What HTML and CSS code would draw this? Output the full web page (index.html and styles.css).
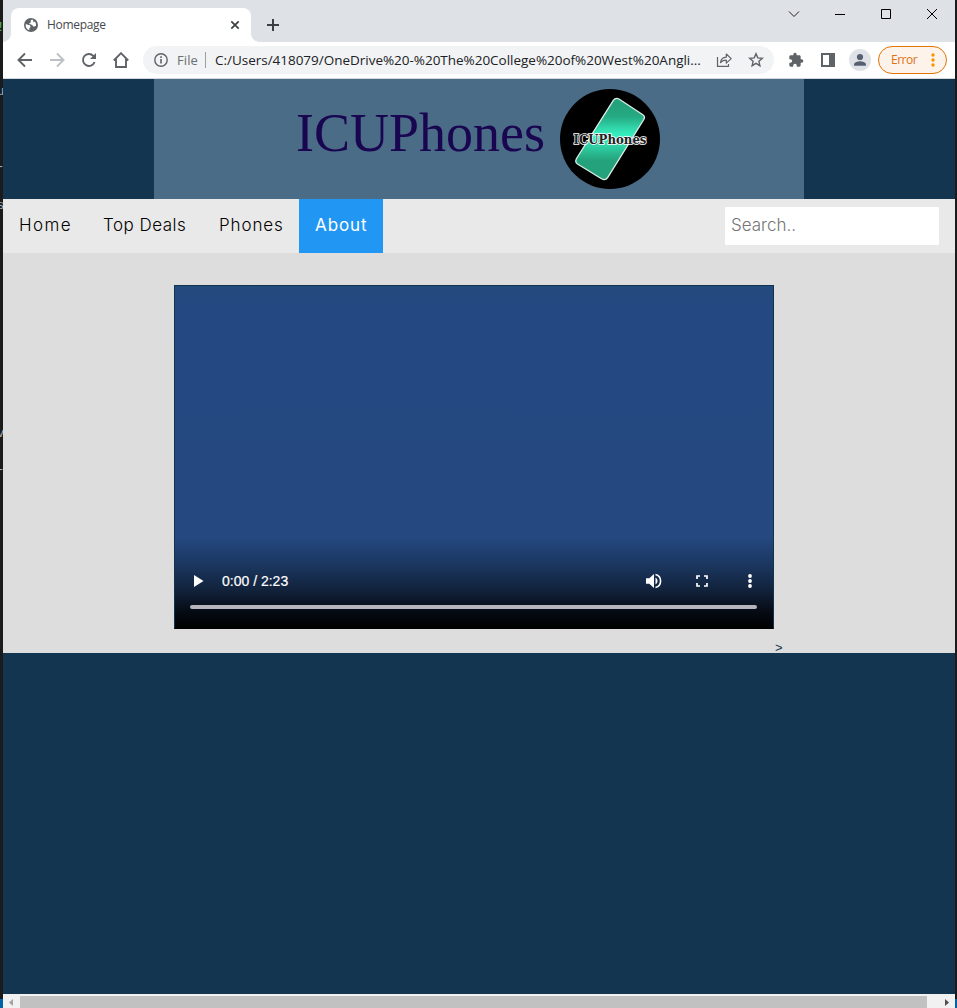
FILE: index.html
```html
<!DOCTYPE html>
<html lang="en">
<head>
<meta charset="utf-8">
<title>Homepage</title>
<link rel="stylesheet" href="styles.css">
</head>
<body>
<div class="desktop">
<span class="sliver sliver-a">!</span><span class="sliver sliver-b">u</span><span class="sliver sliver-c">v</span><span class="sliver sliver-d">-</span><span class="sliver sliver-e">s</span><span class="sliver sliver-f">-</span>
<div class="window">
  <div class="tabstrip">
    <div class="tab">
      <svg class="globe" width="14" height="14" viewBox="0 0 14 14"><circle cx="7" cy="7" r="7" fill="#5f6368"/><path d="M8.500 1.600C7 2 6.300 2.800 6.700 3.600c.4.700 0 1.200-.8 1.300-.8.200-.7 1-.2 1.300.5.400 1.800.2 2.500.7.700.6.600 1.500 1.500 1.600.8.100 1.300-.5 2.300-.5.200-1.700-.2-3.200-1.100-4.400-.5.500-1.400.5-1.600-.2-.2-.6.200-1.200-.8-1.800zM1.700 6.200c1.200 0 2.200.6 3.300.9 1 .3 1.700 1 1.400 2-.2.800-1 .8-1.100 1.600v1.500C3 11.500 1.300 9.300 1.700 6.200z" fill="#fff"/></svg>
      <span class="tab-title">Homepage</span>
      <svg class="tab-close" width="10" height="10" viewBox="0 0 10 10"><path d="M1.300 1.300l7.400 7.400M8.700 1.300L1.300 8.700" stroke="#3c4043" stroke-width="1.700"/></svg>
    </div>
    <svg class="newtab" width="12" height="12" viewBox="0 0 12 12"><path d="M6 0v12M0 6h12" stroke="#3c4043" stroke-width="2"/></svg>
    <div class="wincontrols">
      <svg width="46" height="28" viewBox="0 0 46 28"><path d="M18 11.500l5 5 5-5" fill="none" stroke="#222"/></svg>
      <svg width="46" height="28" viewBox="0 0 46 28"><path d="M18 14.500h10" stroke="#000"/></svg>
      <svg width="46" height="28" viewBox="0 0 46 28"><path d="M18.500 9.500h9v9h-9z" fill="none" stroke="#000"/></svg>
      <svg width="46" height="28" viewBox="0 0 46 28"><path d="M18 9l10 10M28 9L18 19" stroke="#000"/></svg>
    </div>
  </div>
  <div class="toolbar">
    <svg class="tool" viewBox="0 0 16 16"><path d="M15 8H2M8 1.500L1.500 8 8 14.500" fill="none" stroke="#5f6368" stroke-width="1.900"/></svg>
    <svg class="tool" viewBox="0 0 16 16"><path d="M1 8h13M8 1.500L14.500 8 8 14.500" fill="none" stroke="#bdc1c6" stroke-width="1.900"/></svg>
    <svg class="tool" viewBox="0 0 16 16"><path d="M13.600 10A6 6 0 1 1 12.300 3.800L14 5.600" fill="none" stroke="#5f6368" stroke-width="1.900"/><path d="M15 1v6H9z" fill="#5f6368"/></svg>
    <svg class="tool" viewBox="0 0 16 16"><path d="M.8 8.500L8 1.200l7.200 7.300M3 7v8h10V7" fill="none" stroke="#5f6368" stroke-width="1.900"/></svg>
    <div class="omnibox">
      <svg width="14" height="14" viewBox="0 0 14 14"><circle cx="7" cy="7" r="6.200" fill="none" stroke="#5f6368" stroke-width="1.400"/><path d="M7 6v4.400M7 3.300v1.600" stroke="#5f6368" stroke-width="1.600"/></svg>
      <span class="scheme">File</span>
      <span class="sep"></span>
      <span class="url">C:/Users/418079/OneDrive%20-%20The%20College%20of%20West%20Angli...</span>
      <svg class="share" width="16" height="16" viewBox="0 0 16 16"><path d="M1.500 5v9.300h11V12" fill="none" stroke="#5f6368" stroke-width="1.200"/><path d="M4.500 10.500c.4-3.400 2.400-5.200 5.800-5.400V2l4.900 4.600-4.900 4.500V8.200c-2.500 0-4.300.7-5.800 2.300z" fill="none" stroke="#5f6368" stroke-width="1.200" stroke-linejoin="round"/></svg>
      <svg class="star" width="16" height="16" viewBox="0 0 16 16"><path d="M8 1.800l1.800 4.100 4.500.4-3.400 3 1 4.400L8 11.400l-3.900 2.300 1-4.400-3.400-3 4.500-.4z" fill="none" stroke="#5f6368" stroke-width="1.400"/></svg>
    </div>
    <svg class="puzzle" width="16" height="16" viewBox="0 0 24 24"><path d="M20.500 11H19V7c0-1.100-.9-2-2-2h-4V3.500a2.500 2.500 0 0 0-5 0V5H4c-1.100 0-2 .9-2 2v3.800h1.500a2.700 2.700 0 0 1 0 5.400H2V20c0 1.100.9 2 2 2h3.800v-1.500a2.700 2.700 0 0 1 5.400 0V22H17c1.100 0 2-.9 2-2v-4h1.500a2.500 2.500 0 0 0 0-5z" fill="#5f6368"/></svg>
    <svg class="panel" width="14" height="14" viewBox="0 0 14 14"><path d="M0 0h14v14H0zM2 2v10h6V2z" fill="#5f6368" fill-rule="evenodd"/></svg>
    <svg class="profile" width="22" height="22" viewBox="0 0 22 22"><circle cx="11" cy="11" r="11" fill="#dee1e6"/><circle cx="11" cy="8" r="3.100" fill="#576071"/><path d="M5 16.800v-1.400c0-2 4-3.100 6-3.100s6 1.100 6 3.100v1.400z" fill="#576071"/></svg>
    <div class="error"><span>Error</span><svg width="4" height="14" viewBox="0 0 4 14"><g fill="#f29900"><circle cx="2" cy="2" r="1.700"/><circle cx="2" cy="7" r="1.700"/><circle cx="2" cy="12" r="1.700"/></g></svg></div>
  </div>
  <div class="page">
    <header class="banner">
      <h1>ICUPhones</h1>
      <svg class="logo" width="100" height="100" viewBox="0 0 100 100">
        <defs><linearGradient id="phone" gradientUnits="userSpaceOnUse" x1="0" y1="10" x2="0" y2="90"><stop offset=".08" stop-color="#24a27b"/><stop offset=".22" stop-color="#26aa83"/><stop offset=".42" stop-color="#34e8b9"/><stop offset=".48" stop-color="#36f0c2"/><stop offset=".57" stop-color="#31d5a9"/><stop offset=".77" stop-color="#24a27b"/></linearGradient></defs>
        <circle cx="50" cy="50" r="50"/>
        <path d="M53.500 11.200Q55.500 8.200 59 10L82.500 25.500Q85.600 27.500 83.800 30.500L47.800 88.300Q45.500 92 41.500 89.800L17.500 75Q14.600 73 16.500 69.500Z" fill="url(#phone)" stroke="#dcefe8" stroke-width="1.300"/>
        <text x="13.500" y="55" textLength="73" lengthAdjust="spacingAndGlyphs" class="logo-text">ICUPhones</text>
      </svg>
    </header>
    <nav class="topnav">
      <a class="home">Home</a><a class="deals">Top Deals</a><a class="phones">Phones</a><a class="about">About</a>
      <div class="search">Search..</div>
    </nav>
    <main class="content">
      <div class="video">
        <div class="controls">
          <svg width="10" height="12" viewBox="0 0 10 12"><path d="M0 0l9.500 6L0 12z" fill="#fff"/></svg>
          <span class="time">0:00 / 2:23</span>
          <svg class="volume" width="18" height="16" viewBox="0 0 18 16"><path d="M1 5.300h3.300L9 1v14l-4.700-4.300H1z" fill="#fff"/><path d="M10.500 4.500a4 4 0 0 1 0 7z" fill="#fff"/><path d="M10.500 1.500a6.700 6.700 0 0 1 0 13" fill="none" stroke="#fff" stroke-width="1.600"/></svg>
          <svg class="full" width="12" height="12" viewBox="0 0 12 12"><path d="M1 4V1h3M8 1h3v3M11 8v3H8M4 11H1V8" fill="none" stroke="#fff" stroke-width="1.700"/></svg>
          <svg class="more" width="4" height="14" viewBox="0 0 4 14"><g fill="#fff"><circle cx="2" cy="2" r="1.900"/><circle cx="2" cy="7" r="1.900"/><circle cx="2" cy="12" r="1.900"/></g></svg>
        </div>
        <div class="track"></div>
      </div>
      <span class="stray">&gt;</span>
    </main>
  </div>
  <div class="scrollbar">
    <svg width="17" height="14" viewBox="0 0 17 14"><path d="M10 5v7L6 8.500z" fill="#a3a3a3"/></svg>
    <div class="thumb"></div>
    <svg width="28" height="14" viewBox="0 0 28 14"><path d="M18 5v7l4-3.500z" fill="#505050"/></svg>
  </div>
</div>
</div>
</body>
</html>
```

FILE: styles.css
```css
* { box-sizing: border-box; }
body { margin: 0; }
svg { display: block; flex: none; }
.desktop { position: relative; width: 957px; height: 1008px; padding: 0 2px 0 3px; overflow: hidden; background: linear-gradient(#1b1b1b 0 999px, #0063a5 999px); }
.sliver { position: absolute; left: -3px; width: 6px; height: 14px; overflow: hidden; font: 12px/14px "Liberation Mono", monospace; color: #9bb0c0; }
.sliver-a { top: 21px; color: #57c957; }
.sliver-b { top: 85px; }
.sliver-c { top: 427px; }
.sliver-d { top: 463px; }
.sliver-e { top: 199px; }
.sliver-f { top: 160px; }
.window { position: relative; width: 952px; height: 1008px; display: flex; flex-direction: column; background: #fff; }

.tabstrip { height: 42px; flex: none; display: flex; align-items: flex-start; background: #dee1e6; }
.tab { position: relative; width: 240px; height: 34px; margin: 8px 0 0 8px; padding: 0 11px 0 13px; display: flex; align-items: center; background: #fff; border-radius: 8px 8px 0 0; }
.tab::before, .tab::after { content: ""; position: absolute; bottom: 0; width: 8px; height: 8px; }
.tab::before { left: -8px; background: radial-gradient(circle at 0 0, #dee1e6 7.500px, #fff 8px); }
.tab::after { right: -8px; background: radial-gradient(circle at 100% 0, #dee1e6 7.500px, #fff 8px); }
.tab-title { margin-left: 9px; flex: 1; font: 12px/16px "Open Sans", sans-serif; color: #45494d; letter-spacing: -0.300px; }
.newtab { margin: 19px 0 0 16px; }
.wincontrols { display: flex; margin-left: auto; }

.toolbar { height: 37px; flex: none; display: flex; align-items: center; padding: 0 8px 1px 14px; border-bottom: 1px solid #d5d7da; }
.tool { width: 16px; height: 16px; margin-right: 16px; }
.omnibox { width: 631px; height: 28px; margin-left: -2px; padding: 0 10px 0 11px; display: flex; align-items: center; border-radius: 14px; background: #f1f3f4; font: 13px/18px "Open Sans", sans-serif; white-space: nowrap; }
.scheme { width: 28px; margin-left: 9px; color: #6b6f73; letter-spacing: 0.100px; }
.sep { width: 1px; height: 16px; background: #9aa0a6; }
.url { width: 492px; margin-left: 9px; color: #202124; font-size: 13.500px; letter-spacing: -0.020px; }
.share { margin-left: 9px; }
.star { margin-left: auto; }
.puzzle { margin-left: 14px; }
.panel { margin-left: 17px; }
.profile { margin-left: 14px; }
.error { width: 69px; height: 28px; margin-left: 7px; padding: 0 11px 0 12px; display: flex; align-items: center; justify-content: space-between; border: 1px solid #e37400; border-radius: 14px; background: #fdf3ea; color: #dc7215; font: 12px/16px "Open Sans", sans-serif; letter-spacing: -0.500px; }

.page { flex: 1; background: #133550; }
.banner { width: 650px; height: 120px; margin-left: 151px; padding: 10px 0 0 142px; display: flex; background: #4a6c87; }
.banner h1 { width: 264px; margin: 0; font: 400 54px/89px "Liberation Serif", serif; color: #190550; }
.logo-text { font: 700 12.500px "DejaVu Serif", serif; fill: #222; stroke: #fff; stroke-width: 1.600px; paint-order: stroke; }
.topnav { height: 54px; display: flex; background: #e9e9e9; font: 300 17px/52px Inter, sans-serif; color: #000; }
.topnav a { padding-left: 16px; white-space: nowrap; }
.home { width: 84px; letter-spacing: 1.400px; }
.deals { width: 116px; letter-spacing: 0.480px; }
.phones { width: 96px; letter-spacing: 0.900px; }
.topnav .about { width: 84px; background: #2196f3; color: #fff; font-weight: 400; letter-spacing: 0.900px; }
.search { width: 214px; height: 38px; margin: 8px 16px 0 auto; padding-left: 6px; background: #fff; line-height: 36px; color: #757575; }
.content { height: 400px; padding: 32px 0 0 171px; display: flex; background: #ddd; }
.video { width: 600px; height: 344px; padding: 287px 16px 0; border: 1px solid #12334c; border-bottom-color: #000; background: linear-gradient(#234a7e 0, #244881 20px, #24487f 252px, #1b3761 278px, #12233d 303px, #050a12 327px, #000 342px); }
.controls { height: 16px; display: flex; align-items: center; padding-left: 3px; }
.time { margin-left: 18px; flex: 1; font: 14px/16px "Liberation Sans", sans-serif; color: #fff; -webkit-text-stroke: 0.200px #fff; }
.volume { margin-right: 33px; }
.full { margin-right: 40px; }
.more { margin-right: 5px; }
.track { height: 4px; margin: 16px 0 0 -1px; border-radius: 2px; background: #b6b5bd; }
.stray { align-self: flex-end; margin-left: 1px; font: 13px/16px "Liberation Sans", sans-serif; color: #133550; height: 13px; }
.scrollbar { height: 14px; flex: none; display: flex; background: #f1f1f1; }
.thumb { flex: 1; height: 12px; margin-top: 2px; background: #c1c1c1; }
```
